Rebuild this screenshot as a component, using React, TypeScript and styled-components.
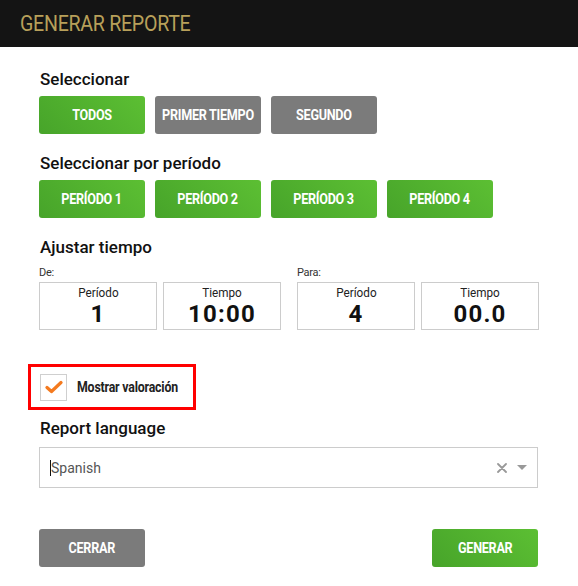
import React from "react";
import styled, { createGlobalStyle } from "styled-components";

const GlobalStyle = createGlobalStyle`
  html, body {
    margin: 0;
    padding: 0;
    background: #ffffff;
    font-family: Roboto, "Noto Sans", sans-serif;
  }
  * {
    box-sizing: border-box;
  }
`;

const selectButtons = [
  { label: "TODOS", active: true },
  { label: "PRIMER TIEMPO", active: false },
  { label: "SEGUNDO", active: false }
];

const periodButtons = ["PERÍODO 1", "PERÍODO 2", "PERÍODO 3", "PERÍODO 4"];

const App: React.FC = () => {
  return (
    <>
      <GlobalStyle />
      <StyledHeader>
        <StyledTitle>GENERAR REPORTE</StyledTitle>
      </StyledHeader>
      <StyledBody>
        <StyledSectionTitle>Seleccionar</StyledSectionTitle>
        <StyledButtonRow>
          {selectButtons.map(b => (
            <StyledButton key={b.label} $green={b.active}>
              <StyledButtonText>{b.label}</StyledButtonText>
            </StyledButton>
          ))}
        </StyledButtonRow>

        <StyledSectionTitle>Seleccionar por período</StyledSectionTitle>
        <StyledButtonRow>
          {periodButtons.map(label => (
            <StyledButton key={label} $green>
              <StyledButtonText>{label}</StyledButtonText>
            </StyledButton>
          ))}
        </StyledButtonRow>

        <StyledSectionTitle>Ajustar tiempo</StyledSectionTitle>
        <StyledTimeGrid>
          <StyledTimeGroup>
            <StyledSmallLabel>De:</StyledSmallLabel>
            <StyledBoxes>
              <StyledTimeBox>
                <StyledBoxLabel>Período</StyledBoxLabel>
                <StyledBoxValue>1</StyledBoxValue>
              </StyledTimeBox>
              <StyledTimeBox>
                <StyledBoxLabel>Tiempo</StyledBoxLabel>
                <StyledBoxValue>10:00</StyledBoxValue>
              </StyledTimeBox>
            </StyledBoxes>
          </StyledTimeGroup>
          <StyledTimeGroup>
            <StyledSmallLabel>Para:</StyledSmallLabel>
            <StyledBoxes>
              <StyledTimeBox>
                <StyledBoxLabel>Período</StyledBoxLabel>
                <StyledBoxValue>4</StyledBoxValue>
              </StyledTimeBox>
              <StyledTimeBox>
                <StyledBoxLabel>Tiempo</StyledBoxLabel>
                <StyledBoxValue>00.0</StyledBoxValue>
              </StyledTimeBox>
            </StyledBoxes>
          </StyledTimeGroup>
        </StyledTimeGrid>

        <StyledHighlight>
          <StyledCheckbox>
            <svg width="18" height="14" viewBox="0 0 18 14">
              <path
                d="M2 7.5 L6.5 11.5 L16 2.5"
                fill="none"
                stroke="#f47a1f"
                strokeWidth="3.2"
                strokeLinecap="round"
                strokeLinejoin="round"
              />
            </svg>
          </StyledCheckbox>
          <StyledCheckLabel>Mostrar valoración</StyledCheckLabel>
        </StyledHighlight>

        <StyledSectionTitle>Report language</StyledSectionTitle>
        <StyledSelect>
          <StyledCaret />
          <StyledSelectText>Spanish</StyledSelectText>
          <StyledClear>
            <svg width="10" height="10" viewBox="0 0 10 10">
              <path
                d="M1 1 L9 9 M9 1 L1 9"
                stroke="#999"
                strokeWidth="1.8"
                strokeLinecap="round"
              />
            </svg>
          </StyledClear>
          <StyledArrow />
        </StyledSelect>

        <StyledFooter>
          <StyledButton>
            <StyledButtonText>CERRAR</StyledButtonText>
          </StyledButton>
          <StyledButton $green>
            <StyledButtonText>GENERAR</StyledButtonText>
          </StyledButton>
        </StyledFooter>
      </StyledBody>
    </>
  );
};

const StyledHeader = styled.header`
  height: 47px;
  background: #141414;
  display: flex;
  align-items: center;
  padding-left: 20px;
`;

const StyledTitle = styled.h1`
  margin: 0;
  font-family: Roboto, sans-serif;
  font-weight: 400;
  font-size: 22px;
  letter-spacing: -0.3px;
  color: #b8a05a;
  transform: scaleX(0.89);
  transform-origin: left center;
  white-space: nowrap;
`;

const StyledBody = styled.main`
  width: 538px;
  padding: 22px 0 0 39px;
  display: flex;
  flex-direction: column;
`;

const StyledSectionTitle = styled.h2`
  margin: 0 0 7px 1px;
  font-size: 17px;
  font-weight: 500;
  line-height: 20px;
  color: #111;
`;

const StyledButtonRow = styled.div`
  display: flex;
  gap: 10px;
  margin-bottom: 19px;
`;

const StyledButton = styled.button<{ $green?: boolean }>`
  width: 106px;
  height: 38px;
  border: none;
  border-radius: 3px;
  padding: 0;
  cursor: pointer;
  display: flex;
  align-items: center;
  justify-content: center;
  background: ${p =>
    p.$green ? "linear-gradient(45deg, #47a42a 0%, #5cbf33 100%)" : "#7b7b7b"};
  color: #fff;
`;

const StyledButtonText = styled.span`
  display: inline-block;
  font-family: Roboto, sans-serif;
  font-weight: 700;
  font-size: 14px;
  letter-spacing: -0.3px;
  white-space: nowrap;
  transform: scaleX(0.9);
`;

const StyledTimeGrid = styled.div`
  display: flex;
  gap: 16px;
  margin-top: 3px;
`;

const StyledTimeGroup = styled.div`
  display: flex;
  flex-direction: column;
`;

const StyledSmallLabel = styled.div`
  font-size: 11px;
  color: #333;
  line-height: 12px;
  margin-bottom: 3px;
  letter-spacing: -0.3px;
`;

const StyledBoxes = styled.div`
  display: flex;
  gap: 6px;
`;

const StyledTimeBox = styled.div`
  width: 118px;
  height: 48px;
  border: 1px solid #cccccc;
  display: flex;
  flex-direction: column;
  align-items: center;
  justify-content: center;
  gap: 1px;
`;

const StyledBoxLabel = styled.div`
  font-size: 13px;
  color: #222;
  line-height: 15px;
  transform: scaleX(0.9);
`;

const StyledBoxValue = styled.div`
  font-size: 24px;
  font-weight: 700;
  color: #111;
  line-height: 26px;
  letter-spacing: 1.2px;
`;

const StyledHighlight = styled.div`
  align-self: flex-start;
  margin: 34px 0 8px -11px;
  width: 168px;
  height: 46px;
  border: 3px solid #ff0000;
  display: flex;
  align-items: center;
  padding-left: 9px;
  gap: 10px;
`;

const StyledCheckbox = styled.div`
  width: 27px;
  height: 27px;
  border: 1px solid #cfcfcf;
  display: flex;
  align-items: center;
  justify-content: center;
`;

const StyledCheckLabel = styled.span`
  display: inline-block;
  font-size: 14px;
  font-weight: 700;
  color: #222;
  letter-spacing: -0.2px;
  white-space: nowrap;
  transform: scaleX(0.88);
  transform-origin: left center;
`;

const StyledSelect = styled.div`
  height: 41px;
  border: 1px solid #cccccc;
  display: flex;
  align-items: center;
  padding: 0 10px;
  margin-top: 2px;
`;

const StyledCaret = styled.span`
  width: 1px;
  height: 16px;
  background: #111;
`;

const StyledSelectText = styled.span`
  flex: 1;
  font-size: 14px;
  color: #555;
`;

const StyledClear = styled.span`
  display: flex;
  margin-right: 10px;
`;

const StyledArrow = styled.span`
  width: 0;
  height: 0;
  border-left: 5px solid transparent;
  border-right: 5px solid transparent;
  border-top: 5px solid #999;
`;

const StyledFooter = styled.div`
  display: flex;
  justify-content: space-between;
  margin-top: 41px;
`;

export default App;
